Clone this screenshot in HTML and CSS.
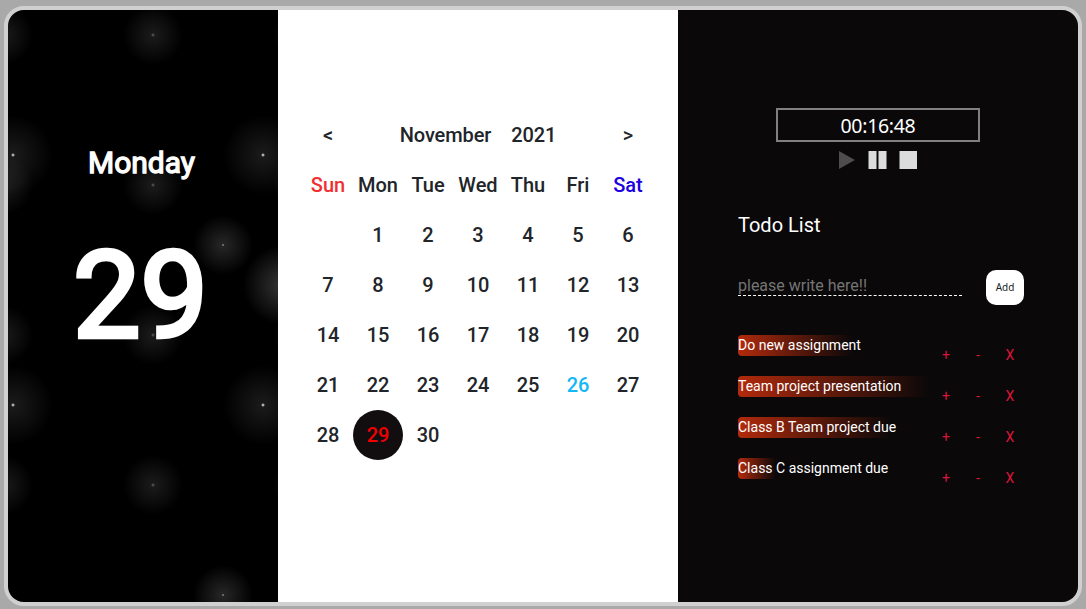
FILE: index.html
```html
<!DOCTYPE html>
<html lang="en">
<head>
<meta charset="utf-8">
<title>Calendar</title>
<link rel="stylesheet" href="styles.css">
</head>
<body>
<main class="board">
  <section class="today">
    <div class="today-name">Monday</div>
    <div class="today-date">29</div>
  </section>
  <section class="calendar">
    <div class="grid">
      <span>&lt;</span>
      <div class="month"><span>November</span><span>2021</span></div>
      <span>&gt;</span>
      <span class="sun">Sun</span><span>Mon</span><span>Tue</span><span>Wed</span><span>Thu</span><span>Fri</span><span class="sat">Sat</span>
      <span></span><span>1</span><span>2</span><span>3</span><span>4</span><span>5</span><span>6</span>
      <span>7</span><span>8</span><span>9</span><span>10</span><span>11</span><span>12</span><span>13</span>
      <span>14</span><span>15</span><span>16</span><span>17</span><span>18</span><span>19</span><span>20</span>
      <span>21</span><span>22</span><span>23</span><span>24</span><span>25</span><span class="marked">26</span><span>27</span>
      <span>28</span><span class="selected">29</span><span>30</span>
    </div>
  </section>
  <section class="side">
    <div class="timer">00:16:48</div>
    <div class="controls">
      <svg width="78" height="18" viewBox="0 0 78 18">
        <path fill="#4d4d4d" d="M0 0L16 9L0 18Z"/>
        <path fill="#dcdcdc" d="M29.5 0h8v18h-8zM39.5 0h8v18h-8zM60.5 0h18v18h-18z"/>
      </svg>
    </div>
    <h2 class="title">Todo List</h2>
    <form class="entry">
      <input class="field" type="text" placeholder="please write here!!">
      <button class="add" type="button">Add</button>
    </form>
    <ul class="todos">
      <li class="todo"><div class="track"><div class="bar" style="width:60%">Do new assignment</div></div><span>+</span><span>-</span><span>X</span></li>
      <li class="todo"><div class="track"><div class="bar" style="width:100%">Team project presentation</div></div><span>+</span><span>-</span><span>X</span></li>
      <li class="todo"><div class="track"><div class="bar" style="width:80%">Class B Team project due</div></div><span>+</span><span>-</span><span>X</span></li>
      <li class="todo"><div class="track"><div class="bar" style="width:20%">Class C assignment due</div></div><span>+</span><span>-</span><span>X</span></li>
    </ul>
  </section>
</main>
</body>
</html>
```
FILE: styles.css
```css
* { box-sizing: border-box; }

body {
  margin: 0;
  padding: 6px 4px 3px;
  height: 609px;
  overflow: hidden;
  background: #a9a9a9;
  font-family: Roboto, sans-serif;
}

.board {
  display: grid;
  grid-template-columns: 270px 400px 400px;
  height: 600px;
  border: 4px solid #d0d0d0;
  border-radius: 20px;
  overflow: hidden;
}

.today {
  display: flex;
  flex-direction: column;
  align-items: center;
  padding: 134px 5px 0 0;
  color: #fff;
  font-weight: 400;
  background-color: #000;
  background-image:
    radial-gradient(white, rgba(255, 255, 255, .2) 2px, transparent 40px),
    radial-gradient(white, rgba(255, 255, 255, .15) 1px, transparent 30px),
    radial-gradient(white, rgba(255, 255, 255, .1) 2px, transparent 40px),
    radial-gradient(rgba(255, 255, 255, .4), rgba(255, 255, 255, .1) 2px, transparent 30px);
  background-size: 550px 550px, 350px 350px, 250px 250px, 150px 150px;
  background-position: 0 0, 40px 60px, 130px 270px, 70px 100px;
}

.today-name { padding-left: 2px; font-size: 30px; line-height: 38px; -webkit-text-stroke: 1.3px #fff; }
.today-date { margin-top: 39px; font-size: 120px; line-height: 150px; -webkit-text-stroke: 4.4px #fff; }

.calendar { padding: 100px 25px 0; background: #fff; }

.grid {
  display: grid;
  grid-template-columns: repeat(7, 50px);
  grid-auto-rows: 50px;
  font-size: 20px;
  font-weight: 500;
  line-height: 51px;
  text-align: center;
  color: #212529;
}

.month {
  grid-column: span 5;
  display: flex;
  justify-content: center;
  gap: 20px;
  letter-spacing: -.1px;
}

.grid .sun { color: #f03030; }
.grid .sat { color: #1b00e0; }
.grid .marked { color: #14b8f5; }
.grid .selected { height: 50px; color: #f00000; background: #120e0f; border-radius: 50%; }

.side { padding: 98px 54px 0 60px; background: #0a0809; color: #fff; }

.timer {
  width: 204px;
  height: 34px;
  margin-left: 38px;
  border: 2px solid #808080;
  font-family: "Noto Sans", sans-serif;
  font-size: 19.5px;
  letter-spacing: -.3px;
  line-height: 32px;
  text-align: center;
}

.controls { height: 18px; margin: 9px 0 0 101px; }
.controls svg { display: block; }

.title { margin: 44px 0 0; font-size: 20px; font-weight: 400; line-height: 24px; }

.entry { display: flex; margin: 33px 0 0; height: 35px; }

.field {
  width: 224px;
  height: 21px;
  margin: 5px 24px 0 0;
  padding: 0;
  border: 0;
  border-bottom: 1px dashed #fff;
  background: transparent;
  font: 16px Roboto, sans-serif;
  color: #fff;
}

.field::placeholder { color: #757575; }

.add {
  width: 38px;
  height: 35px;
  padding: 0 0 1px;
  border: 0;
  border-radius: 10px;
  background: #fff;
  color: #212529;
  font: 10px "Noto Sans", sans-serif;
}

.todos { margin: 30px 0 0; padding: 0; list-style: none; }

.todo {
  display: grid;
  grid-template-columns: 192px 32px 32px 32px;
  height: 41px;
  font-size: 14px;
  line-height: 21px;
}

.todo > span { padding-top: 10px; text-align: center; color: #dc143c; }

.bar {
  height: 21px;
  border-radius: 4px;
  background: linear-gradient(to right, #b22a0c, transparent);
  white-space: nowrap;
}
```
